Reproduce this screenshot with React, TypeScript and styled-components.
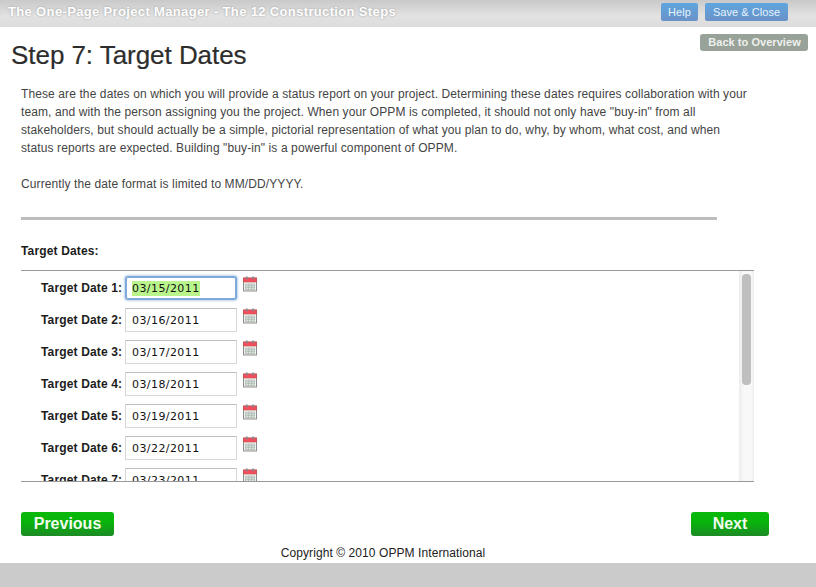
import React from "react";
import styled, { createGlobalStyle } from "styled-components";

const Global = createGlobalStyle`
  html, body { margin: 0; padding: 0; background: #fff; }
  body { font-family: "Liberation Sans", Arial, sans-serif; }
`;

const Page = styled.div`
  width: 816px;
  height: 587px;
  overflow: hidden;
  display: flex;
  flex-direction: column;
`;

const TopBar = styled.header`
  height: 27px;
  flex: none;
  box-sizing: border-box;
  padding: 3px 28px 0 8px;
  display: flex;
  align-items: flex-start;
  gap: 7px;
  background: linear-gradient(#c9c9c9, #e2e2e2 60%, #dcdcdc);
`;

const AppTitle = styled.div`
  flex: 1;
  font-size: 13px;
  font-weight: bold;
  line-height: 18px;
  letter-spacing: 0.35px;
  color: #fff;
  text-shadow: 0 0 2px rgba(120, 120, 120, 0.7);
`;

const BlueButton = styled.button<{ $w: number }>`
  width: ${(p) => p.$w}px;
  height: 18px;
  padding: 0;
  border: none;
  border-radius: 2px;
  font: 11px/18px "Liberation Sans", Arial, sans-serif;
  letter-spacing: 0.05px;
  color: #e8f2fa;
  background: linear-gradient(#5fa5de, #6a92c8);
`;

const Main = styled.main`
  flex: 1;
  display: flex;
  flex-direction: column;
  min-height: 0;
`;

const TitleRow = styled.div`
  height: 38px;
  padding: 7px 8px 0 11px;
  display: flex;
  justify-content: space-between;
  align-items: flex-start;
`;

const Title = styled.h1`
  margin: 5px 0 0;
  font-size: 26px;
  font-weight: normal;
  line-height: 32px;
  letter-spacing: -0.05px;
  color: #2d2d2d;
  -webkit-text-stroke: 0.2px #2d2d2d;
`;

const BackButton = styled.button`
  width: 108px;
  height: 17px;
  padding: 0;
  border: none;
  border-radius: 3px;
  font: bold 11px/17px "Liberation Sans", Arial, sans-serif;
  letter-spacing: 0.05px;
  text-indent: 1px;
  color: #eef0ee;
  background: #98a298;
`;

const Content = styled.section`
  padding: 13px 0 0 21px;
`;

const Intro = styled.p`
  margin: 0;
  font-size: 12px;
  line-height: 18px;
  letter-spacing: 0.105px;
  color: #444;
  white-space: nowrap;
`;

const Rule = styled.hr`
  width: 696px;
  height: 3px;
  margin: 24px 0 0;
  border: none;
  background: #bdbdbd;
`;

const SectionLabel = styled.div`
  margin-top: 23px;
  font-size: 12px;
  font-weight: bold;
  line-height: 16px;
  letter-spacing: 0.15px;
  color: #1c1c1c;
`;

const ListFrame = styled.div`
  width: 733px;
  height: 212px;
  margin-top: 11px;
  box-sizing: border-box;
  border-top: 1px solid #999;
  border-bottom: 1px solid #999;
  display: flex;
`;

const List = styled.div`
  flex: 1;
  overflow: hidden;
  padding: 5px 0 0 20px;
`;

const DateRow = styled.div`
  height: 32px;
  display: flex;
  align-items: flex-start;
`;

const DateLabel = styled.label`
  width: 84px;
  font-size: 12px;
  font-weight: bold;
  line-height: 24px;
  letter-spacing: 0.15px;
  color: #1c1c1c;
  white-space: nowrap;
`;

const DateBox = styled.div<{ $focus?: boolean }>`
  width: 112px;
  height: 24px;
  box-sizing: border-box;
  padding-left: ${(p) => (p.$focus ? "5px" : "6px")};
  display: flex;
  align-items: center;
  border: ${(p) => (p.$focus ? "2px solid #7eabdc" : "1px solid #d8d8d8")};
  border-top-color: ${(p) => (p.$focus ? "#7eabdc" : "#bdbdbd")};
  border-radius: ${(p) => (p.$focus ? "3px" : "0")};
  box-shadow: ${(p) => (p.$focus ? "0 0 2px 1px rgba(143, 182, 224, 0.6)" : "none")};
`;

const DateText = styled.span<{ $focus?: boolean }>`
  font-family: "DejaVu Sans", Verdana, sans-serif;
  font-size: 11px;
  line-height: 15px;
  letter-spacing: 0.42px;
  color: #111;
  background: ${(p) => (p.$focus ? "#b9f58c" : "transparent")};
`;

const CalendarSvg = styled.svg`
  flex: none;
  margin: 0 0 0 5px;
`;

const Track = styled.div`
  width: 15px;
  flex: none;
  box-sizing: border-box;
  padding: 3px 3px 0;
  background: linear-gradient(90deg, #ececec, #f8f8f8 30%, #f8f8f8 80%, #eee);
`;

const Thumb = styled.div`
  height: 111px;
  border-radius: 4px;
  background: #bfbfbf;
`;

const Actions = styled.div`
  width: 748px;
  margin-top: 30px;
  display: flex;
  justify-content: space-between;
`;

const GreenButton = styled.button<{ $w: number }>`
  width: ${(p) => p.$w}px;
  height: 24px;
  padding: 0;
  border: none;
  border-radius: 3px;
  font: bold 16px/24px "Liberation Sans", Arial, sans-serif;
  color: #f2fbf0;
  background: linear-gradient(#08b80a, #07b50a 40%, #1d8a25);
`;

const Copyright = styled.div`
  height: 27px;
  flex: none;
  text-align: center;
  font-size: 12px;
  line-height: 34px;
  letter-spacing: 0.08px;
  padding-right: 50px;
  color: #222;
`;

const BottomBar = styled.footer`
  height: 24px;
  flex: none;
  background: #cbcbcb;
`;

const Calendar = () => (
  <CalendarSvg width="16" height="16" viewBox="0 0 16 16">
    <rect x="1.5" y="2" width="13" height="13" fill="#f0f2ee" stroke="#8d8d8d" />
    <rect x="1.5" y="2" width="13" height="4" fill="#f0505c" stroke="#d8454f" strokeWidth="0.6" />
    <rect x="4" y="0.5" width="1.6" height="3" fill="#888" />
    <rect x="10.4" y="0.5" width="1.6" height="3" fill="#888" />
    <path d="M3.5 8h9v5.5h-9zM3.5 9.8h9M3.5 11.6h9M6.5 8v5.5M9.5 8v5.5" fill="#dfe6df" stroke="#a7b6ae" strokeWidth="0.7" />
  </CalendarSvg>
);

const dates = ["03/15/2011", "03/16/2011", "03/17/2011", "03/18/2011", "03/19/2011", "03/22/2011", "03/23/2011"];

export default function App() {
  return (
    <Page>
      <Global />
      <TopBar>
        <AppTitle>The One-Page Project Manager - The 12 Construction Steps</AppTitle>
        <BlueButton $w={37}>Help</BlueButton>
        <BlueButton $w={83}>Save &amp; Close</BlueButton>
      </TopBar>
      <Main>
        <TitleRow>
          <Title>Step 7: Target Dates</Title>
          <BackButton>Back to Overview</BackButton>
        </TitleRow>
        <Content>
          <Intro>
            These are the dates on which you will provide a status report on your project. Determining these dates requires collaboration with your<br />
            team, and with the person assigning you the project. When your OPPM is completed, it should not only have "buy-in" from all<br />
            stakeholders, but should actually be a simple, pictorial representation of what you plan to do, why, by whom, what cost, and when<br />
            status reports are expected. Building "buy-in" is a powerful component of OPPM.<br />
            <br />
            Currently the date format is limited to MM/DD/YYYY.
          </Intro>
          <Rule />
          <SectionLabel>Target Dates:</SectionLabel>
          <ListFrame>
            <List>
              {dates.map((d, i) => (
                <DateRow key={d}>
                  <DateLabel>Target Date {i + 1}:</DateLabel>
                  <DateBox $focus={i === 0}>
                    <DateText $focus={i === 0}>{d}</DateText>
                  </DateBox>
                  <Calendar />
                </DateRow>
              ))}
            </List>
            <Track>
              <Thumb />
            </Track>
          </ListFrame>
          <Actions>
            <GreenButton $w={93}>Previous</GreenButton>
            <GreenButton $w={78}>Next</GreenButton>
          </Actions>
        </Content>
      </Main>
      <Copyright>Copyright © 2010 OPPM International</Copyright>
      <BottomBar />
    </Page>
  );
}
